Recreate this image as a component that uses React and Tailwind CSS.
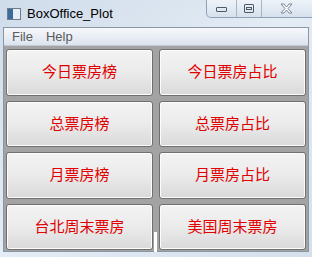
import React from "react";

const buttons = [
  "今日票房榜",
  "今日票房占比",
  "总票房榜",
  "总票房占比",
  "月票房榜",
  "月票房占比",
  "台北周末票房",
  "美国周末票房",
];

function App() {
  return (
    <div
      className="w-[312px] h-[257px] overflow-hidden flex flex-col bg-gradient-to-br from-[#cfdcea] via-[#e4ecf5] to-[#d5e0ec]"
      style={{ fontFamily: '"Liberation Sans", "Noto Sans CJK SC", sans-serif' }}
    >
      {/* Title bar */}
      <div className="relative h-[27px] shrink-0 flex items-center pl-[7px]">
        <div className="w-[14px] h-[12px] border border-[#6f7c8a] bg-white flex">
          <div className="w-[5px] bg-[#3b6a9c]"></div>
          <div className="flex-1 bg-[#e8eef5]"></div>
        </div>
        <span className="ml-[6px] text-[13px] text-black">BoxOffice_Plot</span>
        <div className="absolute top-0 left-[206px] h-[18px] w-[110px] flex border border-t-0 border-[#8fa3b8] rounded-b-[5px] bg-gradient-to-b from-[#eef3f9] to-[#d6e1ed] overflow-hidden">
          <div className="w-[30px] flex items-center justify-center border-r border-[#a7b6c6]">
            <div className="w-[11px] h-[5px] border border-[#4e5a68] rounded-[1px] mt-[2px]"></div>
          </div>
          <div className="w-[25px] flex items-center justify-center border-r border-[#a7b6c6]">
            <div className="w-[10px] h-[9px] border border-[#4e5a68] rounded-[1px] flex items-center justify-center">
              <div className="w-[6px] h-[3px] border border-[#4e5a68]"></div>
            </div>
          </div>
          <div className="flex-1 flex items-center pl-[18px]">
            <svg width="13" height="11" viewBox="0 0 13 11">
              <path
                d="M1 1h3l2.5 3L9 1h3L8 5.5 12 10H9L6.5 7 4 10H1l4-4.5z"
                fill="#ffffff"
                stroke="#7a8796"
                strokeWidth="1"
                strokeLinejoin="round"
              />
            </svg>
          </div>
        </div>
      </div>

      {/* Client area */}
      <div className="flex-1 flex flex-col mx-[3px] mb-[5px] border border-[#8a96a3]">
        <div className="h-[18px] shrink-0 flex items-center gap-[13px] pl-[8px] text-[13px] text-[#5a5a5a] bg-gradient-to-b from-[#f6f8fb] to-[#dde3ee] border-b border-[#c2c9d4]">
          <span>File</span>
          <span>Help</span>
        </div>
        <div className="relative flex-1 bg-[#a3a3a3] grid grid-cols-2 grid-rows-4 gap-x-[6px] gap-y-[5px] px-[2px] pt-[3px] pb-[1px]">
          {buttons.map((b) => (
            <div
              key={b}
              className="flex items-center justify-center rounded-[3px] border border-[#707070] bg-gradient-to-b from-[#f3f3f3] via-[#ebebeb] to-[#d9d9d9] shadow-[inset_0_0_0_1px_#fcfcfc] text-[15px] text-[#e00000]"
            >
              {b}
            </div>
          ))}
          <div className="absolute left-[150px] top-[186px] w-[3px] h-[20px] bg-white"></div>
        </div>
      </div>
    </div>
  );
}

export default App;
